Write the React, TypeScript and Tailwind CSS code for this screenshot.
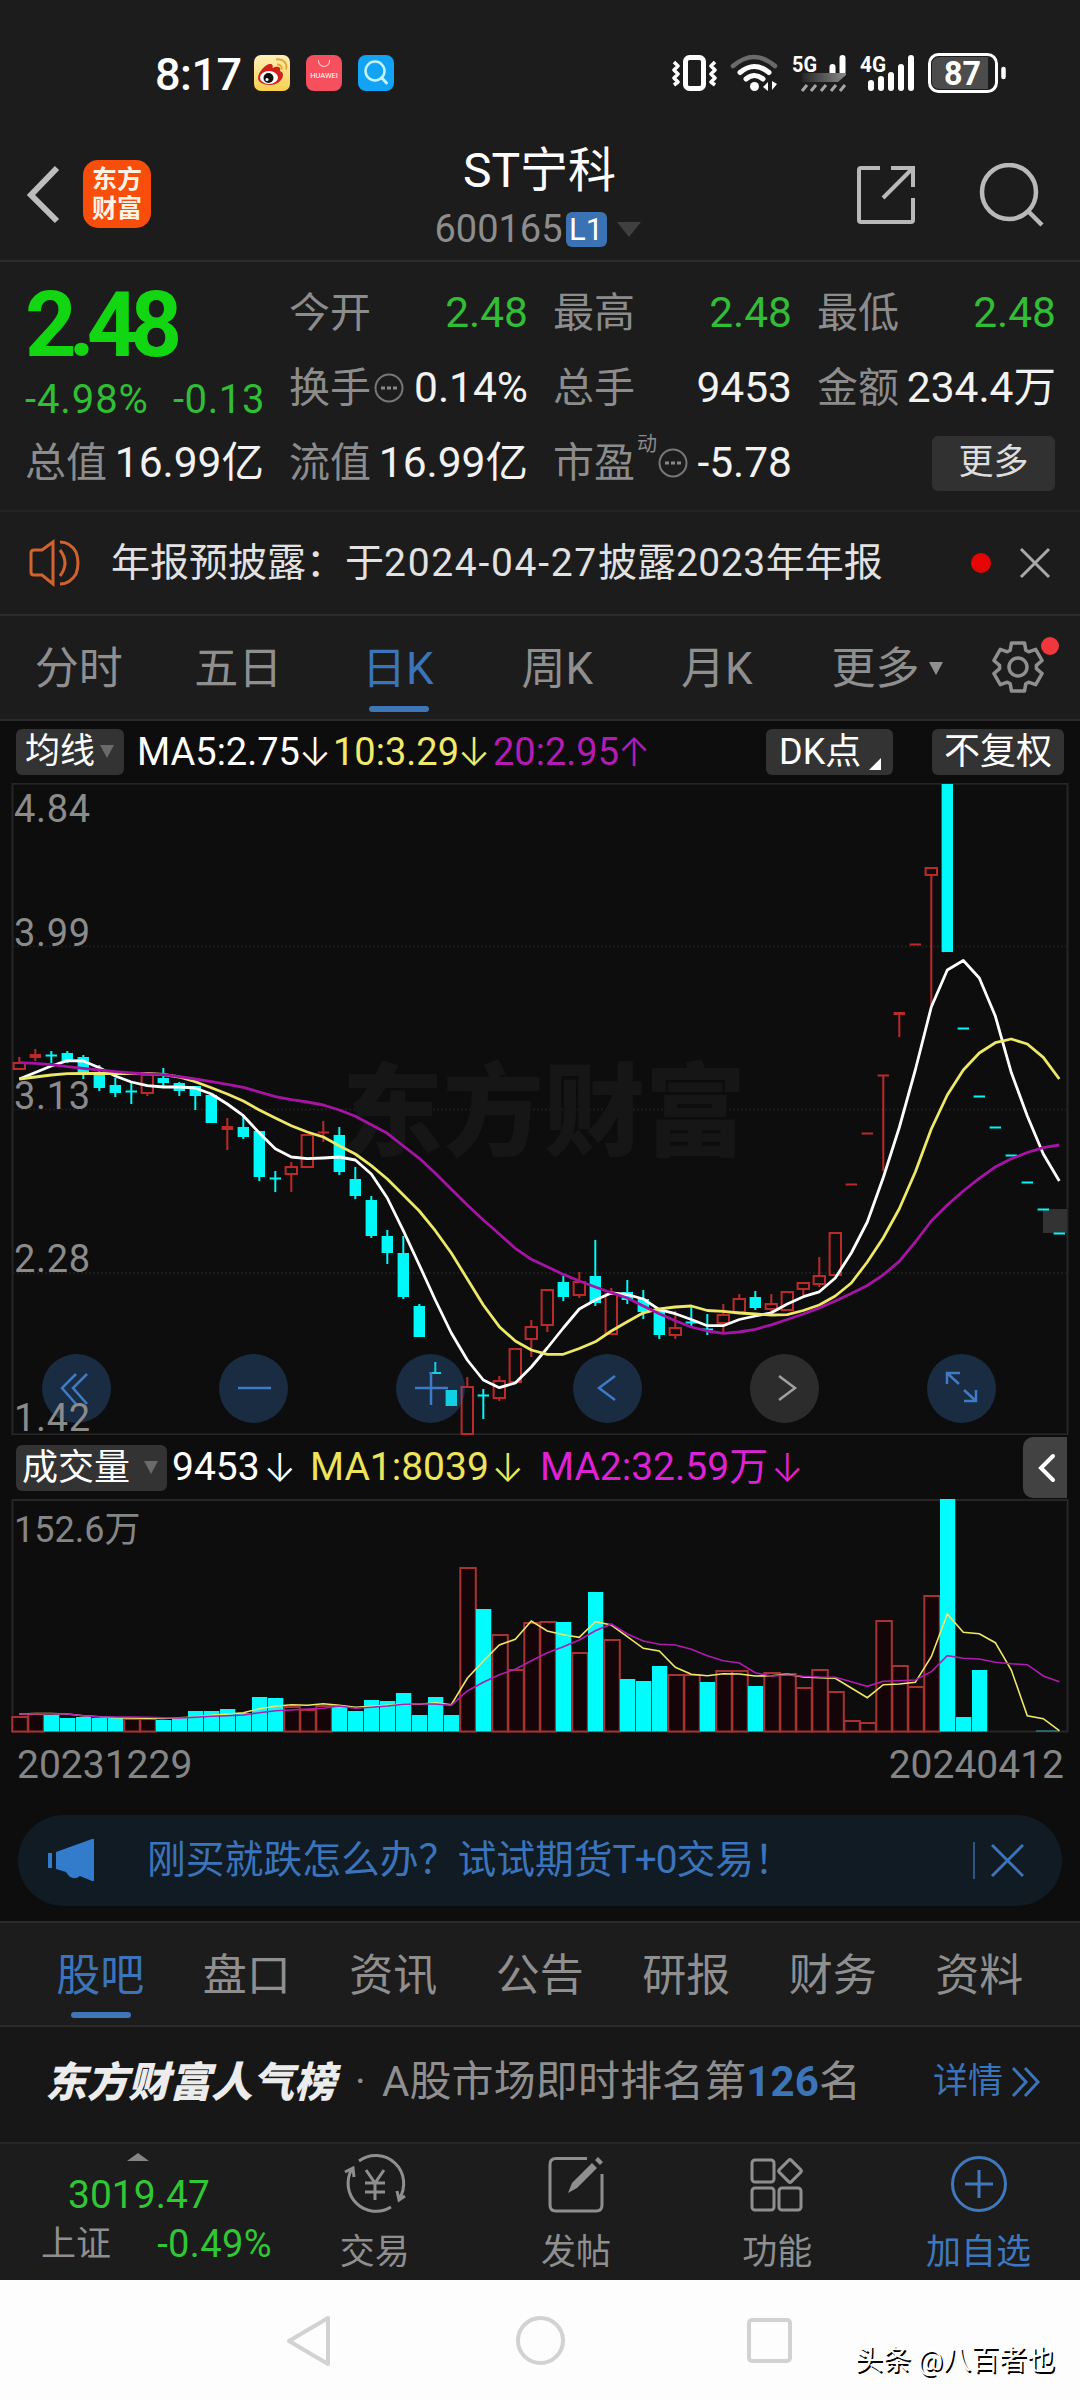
import React from 'react';

type Candle = [string, number, number, number, number];

const STEP = 16;
const FIRST_X = 19.3;
const xAt = (i: number) => FIRST_X + i * STEP;

// direction, high, body top, body bottom, low
const candles: Candle[] = [
  ['r', 1057, 1062, 1070, 1070], ['r', 1049, 1054, 1058, 1061], ['c', 1051, 1055, 1056, 1063], ['c', 1051, 1053, 1061, 1063],
  ['c', 1055, 1057, 1075, 1079], ['c', 1065, 1074, 1088, 1091], ['c', 1078, 1085, 1093, 1097], ['c', 1083, 1091, 1092, 1104],
  ['r', 1073, 1074, 1094, 1096], ['c', 1068, 1078, 1083, 1086], ['c', 1082, 1083, 1091, 1096], ['c', 1086, 1086, 1096, 1110],
  ['c', 1093, 1095, 1123, 1123], ['r', 1118, 1126, 1130, 1150], ['c', 1116, 1127, 1137, 1139], ['c', 1131, 1131, 1177, 1181],
  ['c', 1171, 1178, 1179, 1192], ['r', 1162, 1166, 1175, 1192], ['r', 1134, 1134, 1168, 1168], ['r', 1121, 1132, 1133, 1142],
  ['c', 1127, 1135, 1172, 1175], ['c', 1167, 1179, 1196, 1199], ['c', 1196, 1200, 1236, 1238], ['c', 1230, 1236, 1253, 1264],
  ['c', 1236, 1253, 1297, 1299], ['c', 1304, 1306, 1337, 1337], ['c', 1362, 1372, 1374, 1374], ['c', 1390, 1390, 1406, 1406],
  ['r', 1377, 1386, 1435, 1435], ['c', 1389, 1395, 1396, 1419], ['r', 1376, 1380, 1399, 1401], ['r', 1348, 1348, 1383, 1383],
  ['r', 1320, 1326, 1340, 1357], ['r', 1289, 1289, 1326, 1332], ['c', 1276, 1282, 1297, 1301], ['r', 1272, 1281, 1296, 1298],
  ['c', 1240, 1276, 1303, 1306], ['r', 1288, 1293, 1335, 1335], ['c', 1280, 1292, 1300, 1304], ['c', 1290, 1299, 1312, 1319],
  ['c', 1310, 1310, 1335, 1339], ['r', 1311, 1327, 1336, 1339], ['c', 1305, 1322, 1323, 1327], ['c', 1314, 1329, 1330, 1335],
  ['r', 1304, 1314, 1324, 1334], ['r', 1294, 1298, 1313, 1313], ['c', 1291, 1297, 1308, 1310], ['r', 1294, 1303, 1310, 1313],
  ['r', 1291, 1291, 1311, 1311], ['r', 1282, 1282, 1290, 1295], ['r', 1257, 1275, 1285, 1287], ['r', 1232, 1232, 1276, 1276],
  ['r', 1184, 1184, 1185, 1185], ['r', 1133, 1133, 1134, 1134], ['r', 1075, 1075, 1076, 1171], ['r', 1012, 1012, 1015, 1037],
  ['r', 944, 944, 945, 945], ['r', 867, 867, 876, 1006], ['c', 784, 784, 952, 952], ['c', 1028, 1028, 1029, 1029],
  ['c', 1096, 1096, 1097, 1097], ['c', 1127, 1127, 1128, 1128], ['c', 1155, 1155, 1156, 1156], ['c', 1182, 1182, 1183, 1183],
  ['c', 1209, 1209, 1210, 1210], ['c', 1233, 1233, 1234, 1234],
];

const ma5 = [
  1079, 1072.5, 1066, 1060.7, 1061, 1067.7, 1076, 1082, 1085.7, 1087, 1087, 1088, 1094, 1104, 1115.7, 1133, 1148.7, 1157, 1158.7, 1158, 1157, 1160,
  1174, 1198, 1230.7, 1265, 1300, 1333, 1360, 1380, 1387.7, 1383, 1367, 1348, 1328, 1309, 1300, 1293, 1294.5, 1299, 1309.6, 1313.7, 1319.5, 1325.7,
  1325.7, 1319.5, 1316, 1312.8, 1304, 1296.7, 1291.8, 1278, 1253, 1222, 1177.5, 1127.5, 1070, 1007, 970, 960.5, 978, 1016, 1072.6, 1116, 1154, 1181,
];
const ma10 = [
  1079, 1077, 1075, 1073.7, 1073.5, 1073.5, 1073.5, 1073.5, 1073.5, 1074.5, 1077, 1081.7, 1087.7, 1094, 1101, 1110, 1118, 1125.7, 1132, 1137, 1145.7, 1154,
  1165.7, 1179, 1195, 1211, 1230.7, 1253, 1279, 1305, 1326.7, 1341, 1350, 1354.3, 1354.3, 1348.5, 1341.8, 1331, 1321.7, 1312.8, 1308.8, 1307, 1306, 1310.5,
  1311.4, 1313, 1314, 1315, 1314.6, 1310.5, 1305, 1296, 1283, 1262, 1237.8, 1208.8, 1172, 1129, 1095, 1070, 1053, 1042.7, 1039, 1044, 1057.4, 1079,
];
const ma20 = [
  1062.7, 1063.3, 1064.7, 1066.7, 1068.3, 1070, 1071.7, 1073, 1074, 1074.7, 1076.7, 1079, 1081.7, 1084.3, 1087.3, 1092, 1096.7, 1099.7, 1102, 1105, 1110, 1116.3,
  1124.7, 1133.3, 1146, 1158.3, 1173.3, 1189.3, 1205, 1220, 1234, 1248.3, 1259.3, 1266.8, 1274.4, 1281, 1287, 1292.7, 1298, 1306, 1313.7, 1320.8, 1327, 1331,
  1333.3, 1332, 1329.3, 1324.8, 1319.5, 1314, 1307.9, 1301, 1293.6, 1285.5, 1274.8, 1261.4, 1242, 1221, 1205, 1191, 1178.4, 1167, 1158.8, 1152.5, 1147.6, 1145,
];

const volDirs = 'rrcccccrrccccccccrrrccccccccrcrrrrcrcrcccrrcrrcrrrrrrrrrrrccc';
const volTops = [
  1716, 1713, 1715, 1718, 1717, 1718, 1718, 1718, 1718, 1720, 1718, 1711, 1711, 1709, 1713, 1697, 1698, 1706, 1709, 1705, 1707, 1711,
  1700, 1701, 1693, 1715, 1697, 1715, 1567, 1609, 1634, 1669, 1622, 1621, 1622, 1652, 1592, 1639, 1679, 1681, 1666, 1674, 1674, 1682,
  1670, 1670, 1686, 1672, 1673, 1687, 1669, 1691, 1720, 1722, 1620, 1665, 1686, 1595, 1499, 1717, 1670,
];
const volMa1 = [
  1714, 1713.5, 1713.5, 1714, 1715.7, 1716.7, 1717.7, 1718, 1718.3, 1718.5, 1717.7, 1717, 1715.3, 1714, 1712.7, 1708.7, 1706.3, 1704.7, 1705.3, 1703.7, 1705.3, 1707.3,
  1706.3, 1705.3, 1704, 1704.3, 1702.7, 1704.7, 1678.3, 1661, 1645, 1639.3, 1621, 1631, 1634.7, 1637.3, 1621.7, 1625, 1636.7, 1648.3, 1651, 1667.3, 1674.3, 1675.7,
  1673.7, 1674, 1676, 1675.7, 1674.3, 1677, 1677.7, 1678.3, 1688, 1697.7, 1684.7, 1684, 1682.3, 1656.7, 1614, 1632.3, 1633.7, 1642.7, 1670, 1715.7, 1718.7, 1730.7,
];
const volMa2 = [
  1714, 1713.7, 1713.7, 1714, 1715.7, 1716.7, 1717, 1717, 1717.3, 1717.7, 1718, 1717.3, 1716.3, 1715.7, 1715, 1712.7, 1710.7, 1710, 1709, 1708.3, 1706, 1708.3,
  1707.3, 1706, 1704.3, 1704, 1704, 1705.3, 1691, 1682.3, 1674.7, 1669.3, 1660.7, 1652.7, 1646.7, 1640, 1630.7, 1624, 1634, 1641, 1644.3, 1645, 1649.3, 1655.7,
  1660.7, 1663, 1672.7, 1676, 1675, 1676.3, 1677, 1677.3, 1681.7, 1686.3, 1681.3, 1680.7, 1680, 1671.7, 1655.7, 1658.3, 1659, 1662.3, 1663.7, 1664.7, 1676, 1681.7,
];

const toPoints = (ys: number[]) => ys.map((y, i) => `${xAt(i)},${y}`).join(' ');

// six-toothed gear outline: [angle offset, radius] for each tooth
const toothShape = [[-25, 18.5], [-15, 25], [15, 25], [25, 18.5]];
const gearPoints = [0, 60, 120, 180, 240, 300]
  .flatMap((base) =>
    toothShape.map(([offset, r]) => {
      const a = ((base + offset - 90) * Math.PI) / 180;
      return `${(28 + r * Math.cos(a)).toFixed(1)},${(28 + r * Math.sin(a)).toFixed(1)}`;
    })
  )
  .join(' ');

const StatusBar = () => (
  <div className="flex h-[147px] items-center justify-between pl-[155px] pr-[74px]">
    <div className="flex items-center">
      <span className="w-[99px] pt-[2px] text-[45px] font-medium leading-none tracking-[-0.5px] text-white">8:17</span>
      <div className="flex gap-4">
        <svg width="36" height="36" viewBox="0 0 36 36">
          <defs>
            <linearGradient id="wb" x1="0" y1="0" x2="0" y2="1">
              <stop offset="0" stopColor="#fff0b8" />
              <stop offset="1" stopColor="#f8cf4e" />
            </linearGradient>
          </defs>
          <rect width="36" height="36" rx="7" fill="url(#wb)" />
          <path d="M4 23c0-6 8-14 12-14 3 0 3 2 2.500 4 4-2 9-2 7.500 3 2 .8 3 2 3 4 0 5-6 10-13 10S4 27 4 23Z" fill="#d0211c" />
          <ellipse cx="15" cy="22.500" rx="9" ry="6.500" fill="#fff" />
          <circle cx="14.500" cy="23" r="5" fill="#111" />
          <circle cx="13" cy="24.500" r="1.500" fill="#fff" />
          <path d="M23 9.500c3-.5 5.500 2 4.500 5M22 4.500c7-1.500 12 4 10 10" fill="none" stroke="#e8a62c" strokeWidth="2" />
        </svg>
        <div className="flex h-9 w-9 flex-col items-center rounded-[8px] bg-[#f64f5e]">
          <svg width="14" height="7" viewBox="0 0 14 7" className="mt-[5px]">
            <path d="M1.500 0v1a5.500 5.500 0 0 0 11 0V0" fill="none" stroke="#ffc0c0" strokeWidth="1.200" />
          </svg>
          <span className="mt-[5px] text-[7.5px] leading-none text-white">HUAWEI</span>
        </div>
        <svg width="36" height="36" viewBox="0 0 36 36">
          <rect width="36" height="36" rx="8" fill="#12a3f5" />
          <circle cx="17" cy="16" r="9.500" fill="none" stroke="#c6f4ff" strokeWidth="2.500" />
          <path d="m23.500 22.500 5 5.500" stroke="#c6f4ff" strokeWidth="3" strokeLinecap="round" />
        </svg>
      </div>
    </div>
    <svg width="334" height="42" viewBox="672 52 334 42" fill="none" stroke="#fff">
      {/* vibrate */}
      <rect x="685.500" y="57.500" width="18" height="31" rx="4" strokeWidth="5" />
      <path d="m674 62 4 4-4 4 4 4-4 4 4 4-4 3M715 62l-4 4 4 4-4 4 4 4-4 4 4 3" strokeWidth="3.500" strokeLinejoin="round" />
      {/* wifi */}
      <path d="M733 66q21-18 42 0" stroke="#6b6b6b" strokeWidth="4.500" strokeLinecap="round" />
      <path d="M740 72.500q14.500-12 29 0M746 79q8.500-7 17 0" strokeWidth="5" strokeLinecap="round" />
      <circle cx="754.500" cy="86.500" r="4.500" fill="#fff" stroke="none" />
      <path d="m763 87 5-5v9ZM777 84l-5 6v-9Z" fill="#fff" stroke="none" />
      {/* sim 1 */}
      <text x="792" y="72" fill="#fff" stroke="none" fontSize="22" fontWeight="700" textLength="25" lengthAdjust="spacingAndGlyphs">5G</text>
      <defs>
        <linearGradient id="smear" x1="0" y1="0" x2="1" y2="0">
          <stop offset="0" stopColor="#262626" />
          <stop offset="1" stopColor="#8a8a8a" />
        </linearGradient>
      </defs>
      <path d="M832.500 67v8M842.500 58v14" strokeWidth="6" strokeLinecap="round" />
      <path d="M802 73h44v2l-8 7h-36Z" fill="url(#smear)" stroke="none" />
      <path d="m802 91 5-6m4 6 5-6m5 6 5-6m5 6 5-6m4 6 5-6" stroke="#a5a5a5" strokeWidth="3" />
      {/* sim 2 */}
      <text x="860" y="72" fill="#fff" stroke="none" fontSize="22" fontWeight="700" textLength="26" lengthAdjust="spacingAndGlyphs">4G</text>
      <path d="M871 83v5M881 79v9M891 75v13M901 67v21M911 58v30" strokeWidth="6" strokeLinecap="round" />
      {/* battery */}
      <rect x="929.500" y="54.500" width="67" height="37" rx="9" strokeWidth="3" />
      <path d="M940 57h48v32h-48q-8 0-8-8V65q0-8 8-8Z" fill="#4c4c4c" stroke="none" />
      <path d="M1003.500 69v8" strokeWidth="4.500" strokeLinecap="round" />
      <text x="944" y="85" fill="#fff" stroke="none" fontSize="34" fontWeight="700" textLength="37" lengthAdjust="spacingAndGlyphs">87</text>
    </svg>
  </div>
);

const Header = () => (
  <div className="flex h-[115px] items-start justify-between border-b-2 border-[#2b2b2b] pl-[25px] pr-[36px]">
    <div className="flex w-[336px] items-center gap-[21px] pt-[13px]">
      <svg width="37" height="60" viewBox="0 0 37 60" fill="none" stroke="#bdbdbd" strokeWidth="6">
        <path d="M32 4 6 31l26 26" />
      </svg>
      <div className="flex h-[68px] w-[68px] flex-col items-center justify-center rounded-[15px] bg-[#f94d0b] text-[25px] font-bold leading-[29px] text-[#fff3e4]">
        <span>东方</span>
        <span>财富</span>
      </div>
    </div>
    <div className="flex flex-col items-center">
      <h1 className="pl-[4px] pt-px text-[48px] leading-[46px] text-white">ST宁科</h1>
      <div className="mt-[15px] flex h-[41px] items-center">
        <span className="text-[38px] leading-none text-[#8d8d8d]">600165</span>
        <span className="ml-[3px] flex h-[35px] w-[41px] items-center justify-center rounded-[6px] bg-[#3a72b3] text-[31px] leading-none text-white">L1</span>
        <svg width="24" height="15" viewBox="0 0 24 15" className="ml-[10px]">
          <path d="M0 0h24L12 15Z" fill="#404040" />
        </svg>
      </div>
    </div>
    <div className="flex w-[330px] justify-end gap-[63px] pt-[16px]">
      <svg width="60" height="64" viewBox="0 0 60 64" fill="none" stroke="#b9b9b9" strokeWidth="4">
        <path d="M25 5H6q-2 0-2 2v50q0 2 2 2h50q2 0 2-2V35M36 5h22v19M57 6 28 35" />
      </svg>
      <svg width="66" height="66" viewBox="0 0 66 66" fill="none" stroke="#b9b9b9" strokeWidth="4.500">
        <circle cx="31" cy="29" r="27" />
        <path d="m50 48 14 14" />
      </svg>
    </div>
  </div>
);

const InfoDot = () => (
  <svg width="30" height="30" viewBox="0 0 30 30" className="shrink-0">
    <circle cx="15" cy="15" r="13.500" fill="none" stroke="#777" strokeWidth="2" />
    <path d="M7 13.500h4v3H7zM13 13.500h4v3h-4zM19 13.500h4v3h-4z" fill="#888" />
  </svg>
);

interface QuoteProps {
  label: string;
  value: string;
  green?: boolean;
  info?: boolean;
  sup?: string;
}

const Quote: React.FC<QuoteProps> = ({ label, value, green, info, sup }) => (
  <div className="-mr-px flex items-center justify-between whitespace-nowrap">
    <div className="flex items-center gap-[3px]">
      <span className="text-[41px] leading-none text-[#8c8c8c]">{label}</span>
      {sup && <span className="-ml-px mb-[38px] -mr-[2px] text-[20px] leading-none text-[#8c8c8c]">{sup}</span>}
      {info && <InfoDot />}
    </div>
    <span className={`text-[42.5px] leading-none ${green ? 'text-[#31bd36]' : 'text-[#f2f2f2]'}`}>{value}</span>
  </div>
);

const QuotePanel = () => (
  <div className="h-[250px] border-b-2 border-[#242424] pl-[25px] pr-[25px] pt-[14px]">
    <div className="grid grid-cols-4 grid-rows-[75px_75px_75px] gap-x-[26px]">
      <div className="row-span-2 flex flex-col">
        <div className="h-[99px] text-[90px] font-bold leading-[99px] tracking-[-8px] text-[#12d612]">2.48</div>
        <div className="flex h-[52px] items-center justify-between text-[40px] leading-none text-[#31bd36]">
          <span className="tracking-[0.9px]">-4.98%</span>
          <span className="-mr-[2px] tracking-[0.6px]">-0.13</span>
        </div>
      </div>
      <Quote label="今开" value="2.48" green />
      <Quote label="最高" value="2.48" green />
      <Quote label="最低" value="2.48" green />
      <Quote label="换手" value="0.14%" info />
      <Quote label="总手" value="9453" />
      <Quote label="金额" value="234.4万" />
      <Quote label="总值" value="16.99亿" />
      <Quote label="流值" value="16.99亿" />
      <Quote label="市盈" value="-5.78" info sup="动" />
      <div className="flex items-center justify-end">
        <button className="h-[55px] w-[123px] rounded-[6px] bg-[#313131] pb-[2px] text-[35px] leading-none text-[#dedede]">更多</button>
      </div>
    </div>
  </div>
);

const Notice = () => (
  <div className="flex h-[104px] items-center border-b-2 border-[#2b2b2b] pl-[28px] pr-[29px]">
    <svg width="54" height="48" viewBox="0 0 54 48" fill="none" stroke="#d2622e" strokeWidth="3">
      <path d="M3 14q0-3 3-3h8L25 3v42l-11-9H6q-3 0-3-3Z" />
      <path d="M32 11q10 13 0 26M32 3q10 0 16 10 4 11 0 22-6 10-16 10" />
    </svg>
    <p className="ml-[29px] flex-1 whitespace-nowrap pt-[2px] text-[39px] leading-none text-[#e2e2e2]">
      年报预披露：于<span className="tracking-[1.7px]">2024-04-27</span>披露<span className="tracking-[0.5px]">2023</span>年年报
    </p>
    <span className="h-5 w-5 rounded-full bg-[#e60505]" />
    <svg width="32" height="32" viewBox="0 0 32 32" className="ml-[28px]" stroke="#a9a9a9" strokeWidth="3">
      <path d="m2 2 28 28M30 2 2 30" />
    </svg>
  </div>
);

const periods = ['分时', '五日', '日K', '周K', '月K'];

const PeriodTabs = () => (
  <div className="flex h-[105px] border-b-2 border-[#2b2b2b]">
    {periods.map((p) => (
      <div key={p} className={`flex w-[159.5px] flex-col items-center text-[44px] leading-[107px] ${p === '日K' ? 'text-[#3b74b9]' : 'text-[#8f8f8f]'}`}>
        <span className="h-[90px] pr-[2px]">{p}</span>
        {p === '日K' && <span className="h-[6px] w-[60px] rounded-full bg-[#3f76b8]" />}
      </div>
    ))}
    <div className="ml-[34px] flex items-center pt-[3px] text-[44px] leading-none text-[#8f8f8f]">
      更多
      <svg width="14" height="13" viewBox="0 0 14 13" className="ml-[9px]">
        <path d="M0 0h14L7 13Z" fill="#8f8f8f" />
      </svg>
    </div>
    <div className="relative ml-[47px] flex items-center">
      <svg width="56" height="56" viewBox="0 0 56 56" fill="none" stroke="#8f8f8f" strokeWidth="3.500" strokeLinejoin="round">
        <polygon points={gearPoints} />
        <circle cx="28" cy="28" r="9" />
      </svg>
      <span className="absolute left-[51px] top-[21px] h-[18px] w-[18px] rounded-full bg-[#f0383c]" />
    </div>
  </div>
);

const Arrow: React.FC<{ dir: string }> = ({ dir }) => (
  <span className="flex w-[26px] justify-center font-[Inter,sans-serif] text-[39px] font-light">{dir}</span>
);

const Caret = () => (
  <svg width="14" height="13" viewBox="0 0 14 13">
    <path d="M0 0h14L7 13Z" fill="#6a6a6a" />
  </svg>
);

const MaRow = () => (
  <div className="flex h-[62px] items-center pl-4 pr-4 text-[38px] leading-none">
    <button className="flex h-[46px] w-[108px] items-center gap-[5px] rounded-[6px] bg-[#333] pl-[9px] text-[35px] leading-none text-white">
      均线
      <Caret />
    </button>
    <div className="ml-[13px] flex w-[196px] items-center text-white">MA5:2.75<span className="w-[2px]" /><Arrow dir="↓" /></div>
    <div className="flex w-[160px] items-center text-[#f3e96a]">10:3.29<span className="w-[2px]" /><Arrow dir="↓" /></div>
    <div className="flex items-center text-[#b21cb2]">20:2.95<span className="w-[2px]" /><Arrow dir="↑" /></div>
    <button className="ml-auto flex h-[46px] w-[127px] items-center rounded-[6px] bg-[#333] pl-[13px] text-[36px] leading-none text-white">
      DK点
      <svg width="12" height="12" viewBox="0 0 12 12" className="ml-[8px] mt-[24px]">
        <path d="M12 0v12H0Z" fill="#fff" />
      </svg>
    </button>
    <button className="ml-[39px] h-[46px] w-[132px] rounded-[6px] bg-[#333] text-[36px] leading-none text-white">不复权</button>
  </div>
);

const FloatButton: React.FC<{ gray?: boolean; children: React.ReactNode }> = ({ gray, children }) => (
  <div className={`flex h-[69px] w-[69px] items-center justify-center rounded-full ${gray ? 'bg-[#ffffff]/13' : 'bg-[#3874be]/30'}`}>
    <svg width="40" height="40" viewBox="0 0 40 40" fill="none" stroke={gray ? '#a0a0a0' : '#3f7ac4'} strokeWidth="2.500">
      {children}
    </svg>
  </div>
);

const CandleChart = () => (
  <div className="relative h-[652px]">
    <svg width="1080" height="652" viewBox="0 783 1080 652" className="block">
      <rect x="12.500" y="783.700" width="1055" height="650.700" fill="none" stroke="#262626" strokeWidth="2" />
      {[946.5, 1109.5, 1273].map((y) => (
        <path key={y} d={`M13 ${y}h1054`} stroke="#1d1d1d" strokeWidth="2" strokeDasharray="2 2" />
      ))}
      <text x="342" y="1148" fontSize="101" fontWeight="900" fill="#161616">东方财富</text>
      <rect x="1043" y="1209" width="24" height="24" fill="#333" />
      {candles.map(([dir, high, top, bottom, low], i) => {
        const x = xAt(i);
        const h = bottom - top;
        const color = dir === 'r' ? '#bb2a2a' : '#00f8f8';
        return (
          <g key={i} stroke={color} strokeWidth="2">
            {top > high && <path d={`M${x} ${high}V${top}`} />}
            {low > bottom && <path d={`M${x} ${bottom}V${low}`} />}
            {h < 5 ? (
              <path d={`M${x - 5.700} ${top + h / 2}h11.400`} strokeWidth={Math.max(2, h)} />
            ) : dir === 'r' ? (
              <rect x={x - 5.700} y={top + 1} width="11.400" height={h - 2} fill="none" />
            ) : (
              <rect x={x - 5.700} y={top} width="11.400" height={h} fill={color} stroke="none" />
            )}
          </g>
        );
      })}
      <g fill="none" strokeWidth="2.800" strokeLinejoin="round">
        <polyline points={toPoints(ma5)} stroke="#fff" />
        <polyline points={toPoints(ma10)} stroke="#eee868" />
        <polyline points={toPoints(ma20)} stroke="#a514a5" />
      </g>
    </svg>
    <div className="absolute inset-x-0 top-[571px] flex gap-[108px] pl-[42px]">
      <FloatButton><path d="M19 6 5 20l14 16M30 6 16 20l14 16" /></FloatButton>
      <FloatButton><path d="M4 20h33" /></FloatButton>
      <FloatButton><path d="M4 20h33M20 4v33" /></FloatButton>
      <FloatButton><path d="M27 8 11 20l16 12" /></FloatButton>
      <FloatButton gray><path d="m14 8 16 12-16 12" /></FloatButton>
      <FloatButton><path d="M5 16V5h13M5 5l12 11M34 22v11H22M34 33 22 22" /></FloatButton>
    </div>
    <div className="absolute left-[14px] top-[7px] flex flex-col text-[38px] leading-[38px] tracking-[0.7px] text-[#8b8b8b]">
      <span>4.84</span>
      <span className="mt-[86px]">3.99</span>
      <span className="mt-[125px]">3.13</span>
      <span className="mt-[125px]">2.28</span>
      <span className="mt-[121px]">1.42</span>
    </div>
  </div>
);

const VolumeRow = () => (
  <div className="flex h-[64px] items-center pl-4 pr-[13px] pt-[2px] text-[39px] leading-none">
    <button className="flex h-[46px] w-[151px] items-center justify-between rounded-[6px] bg-[#333] pl-[6px] pr-[9px] text-[36px] leading-none text-white">
      成交量
      <Caret />
    </button>
    <div className="ml-[5px] flex w-[138px] items-center text-white">9453<span className="w-[7px]" /><Arrow dir="↓" /></div>
    <div className="flex w-[230px] items-center text-[#ede45c]">MA1:8039<span className="w-[6px]" /><Arrow dir="↓" /></div>
    <div className="flex items-center text-[#dc22d4]">MA2:32.59万<span className="w-[6px]" /><Arrow dir="↓" /></div>
    <div className="ml-auto flex h-[61px] w-[44px] items-center justify-center rounded-l-[10px] bg-[#424242]">
      <svg width="20" height="30" viewBox="0 0 20 30" fill="none" stroke="#fff" strokeWidth="4" strokeLinecap="round" className="ml-[3px]">
        <path d="M16 3 4 15l12 12" />
      </svg>
    </div>
  </div>
);

const VolumeChart = () => (
  <div className="relative h-[234px]">
    <svg width="1080" height="234" viewBox="0 1499 1080 234" className="block">
      <rect x="12.500" y="1500" width="1055" height="231.500" fill="none" stroke="#262626" strokeWidth="2" />
      {volTops.map((top, i) => {
        const x = xAt(i) - 8;
        return volDirs[i] === 'r' ? (
          <rect key={i} x={x + 1} y={top + 1} width="15.500" height={1730.5 - top} fill="#140608" stroke="#a83232" strokeWidth="2" />
        ) : (
          <rect key={i} x={x + 0.7} y={top} width="15.300" height={1731.5 - top} fill="#00fcfc" />
        );
      })}
      <path d="M1036 1731h24" stroke="#2a7a80" strokeWidth="1.500" />
      <g fill="none" strokeWidth="1.600">
        <polyline points={toPoints(volMa1)} stroke="#eee868" />
        <polyline points={toPoints(volMa2)} stroke="#b01cb0" />
      </g>
    </svg>
    <span className="absolute left-[14px] top-[13px] text-[36px] leading-[36px] text-[#858585]">152.6万</span>
  </div>
);

const Promo = () => (
  <div className="mx-[18px] mt-[19px] flex h-[91px] items-center rounded-full bg-[#111b23] pl-[30px] pr-[38px] text-[#3b74ba]">
    <svg width="46" height="42" viewBox="0 0 46 42" fill="#337bcb">
      <path d="M0 14h4v15H0zM8 13 44 0h2v42h-2l-12-5q-8 6-14-4l-10-3Z" />
    </svg>
    <span className="ml-[53px] flex-1 whitespace-nowrap text-[38.8px] leading-none">
      刚买就跌怎么办？试试期货<span className="tracking-[-1px]">T+0</span>交易！
    </span>
    <span className="h-[37px] w-[2px] bg-[#2d5685]" />
    <svg width="33" height="33" viewBox="0 0 33 33" className="ml-[16px]" stroke="#3b74ba" strokeWidth="3">
      <path d="m1 1 31 31M32 1 1 32" />
    </svg>
  </div>
);

const sections = ['股吧', '盘口', '资讯', '公告', '研报', '财务', '资料'];

const SectionTabs = () => (
  <div className="flex h-[106px] border-b-2 border-t-2 border-[#2b2b2b] pl-[27px]">
    {sections.map((s, i) => (
      <div key={s} className={`flex w-[146.5px] flex-col items-center text-[44px] leading-[107px] ${i === 0 ? 'text-[#3b74b9]' : 'text-[#8f8f8f]'}`}>
        <span className="h-[89px]">{s}</span>
        {i === 0 && <span className="ml-[2px] h-[6px] w-[60px] rounded-full bg-[#3f76b8]" />}
      </div>
    ))}
  </div>
);

const RankRow = () => (
  <div className="flex h-[117px] items-center whitespace-nowrap border-b-2 border-[#262626] bg-[#171717] pb-[6px] pl-[45px] pr-[39px] leading-none">
    <span className="w-[299px] pt-[3px] text-[41.5px] font-black italic text-[#ececec]">东方财富人气榜</span>
    <span className="w-[38px] pl-[11px] text-[41px] text-[#8f8f8f]">·</span>
    <span className="flex-1 text-[42px] tracking-[0.1px] text-[#8f8f8f]">
      A股市场即时排名第<b className="text-[#3b74b9]">126</b>名
    </span>
    <span className="flex items-center gap-[8px] text-[35px] text-[#3b74b9]">
      详情
      <svg width="30" height="30" viewBox="0 0 30 30" fill="none" stroke="#3b74b9" strokeWidth="3">
        <path d="m2 1 13 14L2 29M14 1l13 14-13 14" />
      </svg>
    </span>
  </div>
);

const ToolItem: React.FC<{ label: string; blue?: boolean; children: React.ReactNode }> = ({ label, blue, children }) => (
  <div className={`flex w-[201.3px] flex-col items-center pt-[8px] ${blue ? 'text-[#4078bd]' : 'text-[#8f8f8f]'}`}>
    <svg width="64" height="64" viewBox="0 0 64 64" fill="none" stroke="currentColor" strokeWidth="3">
      {children}
    </svg>
    <span className="mt-[19px] text-[35px] leading-none">{label}</span>
  </div>
);

const BottomBar = () => (
  <div className="flex h-[136px]">
    <div className="w-[274px] pl-[41px] leading-none">
      <svg width="22" height="8" viewBox="0 0 22 8" className="ml-[86px] mt-[9px]">
        <path d="M11 0 22 8H0Z" fill="#858585" />
      </svg>
      <div className="mt-[15px] pl-[27px] text-[39px] leading-[39px] text-[#31c636]">3019.47</div>
      <div className="mt-[9px] flex h-[40px] items-center justify-between pr-[2px]">
        <span className="text-[35px] text-[#8f8f8f]">上证</span>
        <span className="tracking-[0.4px] text-[38px] text-[#31c636]">-0.49%</span>
      </div>
    </div>
    <ToolItem label="交易">
      <path d="M16 9a28 28 0 0 1 40 38M48 55A28 28 0 0 1 9 17M2 20l8-4 1 9M54 39l2 9 6-4" />
      <path d="m23 18 9 13 9-13M22 31h20M22 40h20M32 31v17" />
    </ToolItem>
    <ToolItem label="发帖">
      <path d="M43 6.500H12q-6 0-6 6V53q0 6 6 6h40q6 0 6-6V22" />
      <path d="m24 41 4-10 20-20 5 5-20 20ZM51 8l3-3 5 5-3 3Z" fill="currentColor" stroke="none" />
    </ToolItem>
    <ToolItem label="功能">
      <rect x="7" y="8" width="22" height="22" rx="3" />
      <rect x="7" y="36" width="22" height="22" rx="3" />
      <rect x="34" y="36" width="22" height="22" rx="3" />
      <rect x="36.500" y="10.500" width="17" height="17" rx="2" transform="rotate(45 45 19)" />
    </ToolItem>
    <ToolItem label="加自选" blue>
      <circle cx="32" cy="32" r="26.500" />
      <path d="M18 32h28M32 18v28" />
    </ToolItem>
  </div>
);

const NavBar = () => (
  <div className="relative h-[120px] bg-[#fdfdfd]">
    <div className="flex h-full items-center pl-[282px]">
      <svg width="54" height="56" viewBox="0 0 54 56" fill="none" stroke="#d2d2d2" strokeWidth="4" strokeLinejoin="round">
        <path d="M46 6v46L7 29Z" />
      </svg>
      <span className="ml-[180px] h-[49px] w-[49px] rounded-full border-4 border-[#d2d2d2]" />
      <span className="ml-[182px] h-[45px] w-[45px] rounded-[5px] border-4 border-[#d2d2d2]" />
    </div>
    <span className="absolute right-[25px] top-[67px] whitespace-nowrap text-[28px] leading-none text-white [text-shadow:1.5px_1.5px_0.5px_#000]">
      头条 @八百者也
    </span>
  </div>
);

const App: React.FC = () => {
  return (
    <div className="flex h-[2400px] w-[1080px] flex-col overflow-hidden bg-[#1c1c1c] font-[Roboto,'Noto_Sans_CJK_SC',sans-serif]">
      <StatusBar />
      <Header />
      <QuotePanel />
      <Notice />
      <PeriodTabs />
      <div className="h-[1201px] bg-[#0d0d0d]">
        <MaRow />
        <CandleChart />
        <VolumeRow />
        <VolumeChart />
        <div className="flex h-[63px] items-center justify-between pl-[17px] pr-4 pt-[2px] text-[39px] leading-none text-[#858585]">
          <span>20231229</span>
          <span>20240412</span>
        </div>
        <Promo />
      </div>
      <SectionTabs />
      <RankRow />
      <BottomBar />
      <NavBar />
    </div>
  );
};

export default App;
